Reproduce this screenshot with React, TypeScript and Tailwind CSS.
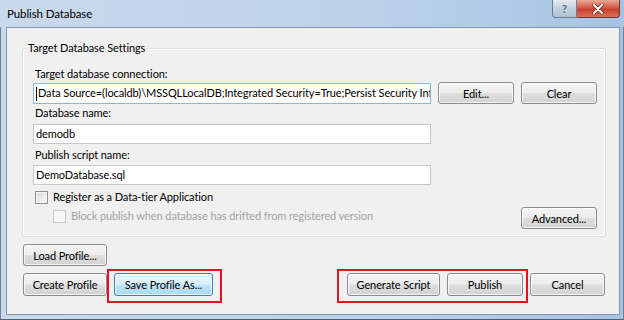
import type { ReactNode } from "react";

const btnGrey =
  "border-[#8b8b8b] bg-[linear-gradient(to_bottom,#f4f4f4_0%,#ececec_48%,#dedede_52%,#d2d2d2_100%)]";
const btnBlue =
  "border-[#3c7fb1] bg-[linear-gradient(to_bottom,#eaf6fd_0%,#d9f0fc_48%,#bee6fd_52%,#a7d9f5_100%)]";

function Button({
  children,
  className = "",
  blue = false,
}: {
  children: ReactNode;
  className?: string;
  blue?: boolean;
}) {
  return (
    <div
      className={`flex shrink-0 items-center justify-center rounded-[3px] border leading-none text-black shadow-[inset_0_0_0_1px_rgba(255,255,255,0.75)] ${
        blue ? btnBlue : btnGrey
      } ${className}`}
    >
      {children}
    </div>
  );
}

function TextBox({
  value,
  focused = false,
  className = "",
}: {
  value: string;
  focused?: boolean;
  className?: string;
}) {
  return (
    <div
      className={`flex w-[398px] shrink-0 items-center overflow-hidden whitespace-nowrap border bg-white pl-[2px] text-black ${
        focused ? "border-[#8ab6e2]" : "border-[#c5c9cf]"
      } ${className}`}
    >
      {focused && <span className="mr-[1px] h-[14px] w-px shrink-0 bg-black" />}
      <span className="min-w-0 overflow-hidden">{value}</span>
    </div>
  );
}

function CheckBox({ disabled = false }: { disabled?: boolean }) {
  return (
    <span
      className={`h-[13px] w-[13px] shrink-0 border ${
        disabled
          ? "border-[#c9c9c9] bg-[#f7f7f7]"
          : "border-[#8e8f8f] bg-[linear-gradient(135deg,#dcdcdc,#fbfbfb)] shadow-[inset_0_0_0_1px_#f4f4f4]"
      }`}
    />
  );
}

export default function App() {
  return (
    <div className="flex h-[320px] w-[624px] flex-col bg-[linear-gradient(to_right,#c9d9ec,#bcd1ea_60%,#a6c3e4)] font-['Lato','Noto_Sans',sans-serif] text-[11px] tracking-[-0.1px] text-black">
      {/* Title bar */}
      <div className="flex h-[27px] shrink-0 items-start justify-between">
        <div className="pl-[7px] pt-[6px] text-[11.5px] leading-[16px]">Publish Database</div>
        <div className="mr-[4px] flex">
          <div className="flex h-[18px] w-[25px] items-center justify-center rounded-bl-[4px] border border-t-0 border-[#6d7c90] bg-[linear-gradient(to_bottom,#e4ebf3,#c3d0de_50%,#b1c2d5)] text-[11px] font-bold leading-none text-[#5c6d82]">
            ?
          </div>
          <div className="flex h-[18px] w-[43px] items-center justify-center rounded-br-[4px] border border-l-0 border-t-0 border-[#6d3a33] bg-[linear-gradient(to_bottom,#e9a99a,#d45a45_45%,#c7402e_55%,#d6725a)]">
            <svg width="12" height="10" viewBox="0 0 12 10">
              <path d="M2 1 L10 9 M10 1 L2 9" stroke="#5a2a22" strokeWidth="3.4" strokeLinecap="round" />
              <path d="M2 1 L10 9 M10 1 L2 9" stroke="#ffffff" strokeWidth="2" strokeLinecap="round" />
            </svg>
          </div>
        </div>
      </div>

      {/* Frame + client */}
      <div className="flex h-[288px] shrink-0">
        <div className="w-[6px] shrink-0 border-l border-[#6f7f94]" />
        <div className="flex h-[288px] w-[614px] shrink-0 flex-col border border-[#8496ad] bg-[#f0f0f0]">
          {/* Group box */}
          <div className="relative ml-[15px] mt-[20px] h-[189px] w-[584px] shrink-0 rounded-[3px] border border-[#d5dfe5] pl-[10px] pt-[17px] shadow-[inset_0_0_0_1px_#ffffff]">
            <span className="absolute -top-[9px] left-[3px] bg-[#f0f0f0] px-[2px] leading-[16px]">
              Target Database Settings
            </span>

            <div className="h-[16px] pl-[2px] leading-[16px]">Target database connection:</div>
            <div className="flex h-[22px] items-end gap-[7px]">
              <TextBox
                focused
                className="h-[21px]"
                value="Data Source=(localdb)\MSSQLLocalDB;Integrated Security=True;Persist Security Info"
              />
              <Button className="h-[22px] w-[76px] self-start">Edit...</Button>
              <Button className="h-[22px] w-[76px] self-start">Clear</Button>
            </div>

            <div className="mt-[1px] h-[16px] pl-[2px] leading-[16px]">Database name:</div>
            <TextBox className="mt-[3px] h-[20px]" value="demodb" />

            <div className="mt-[3px] h-[16px] pl-[2px] leading-[16px]">Publish script name:</div>
            <TextBox className="mt-[2px] h-[20px]" value="DemoDatabase.sql" />

            <div className="mt-[4px] flex w-[564px] items-start justify-between">
              <div className="flex flex-col">
                <div className="flex h-[16px] items-center gap-[5px] pl-[2px]">
                  <CheckBox />
                  <span className="leading-[16px]">Register as a Data-tier Application</span>
                </div>
                <div className="mt-[3px] flex h-[16px] items-center gap-[5px] pl-[20px]">
                  <CheckBox disabled />
                  <span className="leading-[16px] text-[#a3a3a3]">
                    Block publish when database has drifted from registered version
                  </span>
                </div>
              </div>
              <Button className="mt-[18px] h-[22px] w-[76px]">Advanced...</Button>
            </div>
          </div>

          {/* Profile buttons */}
          <Button className="ml-[16px] mt-[7px] h-[22px] w-[84px]">Load Profile...</Button>

          <div className="mt-[3px] flex items-start">
            <Button className="ml-[16px] mt-[4px] h-[23px] w-[84px]">Create Profile</Button>
            <div className="h-[34px] w-[115px] shrink-0 border-2 border-[#e3131c] pl-[5px] pt-[2px]">
              <Button blue className="h-[23px] w-[99px]">
                Save Profile As...
              </Button>
            </div>
            <div className="ml-[115px] flex h-[34px] w-[191px] shrink-0 gap-[7px] border-2 border-[#e3131c] pl-[8px] pt-[2px]">
              <Button className="h-[23px] w-[93px]">Generate Script</Button>
              <Button className="h-[23px] w-[76px]">Publish</Button>
            </div>
            <Button className="ml-[2px] mt-[4px] h-[23px] w-[75px]">Cancel</Button>
          </div>
        </div>
        <div className="w-[4px] shrink-0 border-r border-[#6f7f94]" />
      </div>

      {/* Bottom frame */}
      <div className="h-[5px] shrink-0 border-b border-[#4e5d70] border-x border-x-[#6f7f94]" />
    </div>
  );
}
